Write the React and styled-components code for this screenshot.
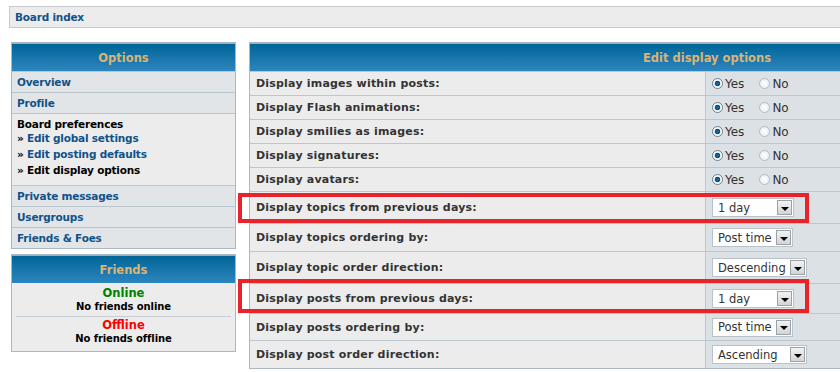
import React from "react";
import styled, { createGlobalStyle } from "styled-components";

const Global = createGlobalStyle`
  html, body {
    margin: 0;
    padding: 0;
    background: #fff;
    overflow: hidden;
  }
  body {
    font-family: Verdana, "DejaVu Sans", sans-serif;
    font-size: 11px;
    color: #000;
  }
`;

const Page = styled.div`
  position: relative;
  width: 1200px;
  padding: 6px 0 0 9px;
`;

const Breadcrumb = styled.div`
  height: 20px;
  width: 1100px;
  background: #ececec;
  border: 1px solid #c5cbd0;
  display: flex;
  align-items: center;
  padding-left: 5px;
`;

const NavLink = styled.a`
  color: ${(p) => (p.$active ? "#000" : "#105289")};
  font-weight: bold;
  text-decoration: none;
  font-size: 10.5px;
  letter-spacing: -0.2px;
`;

const Columns = styled.div`
  display: flex;
  gap: 13px;
  margin-top: 14px;
  margin-left: 2px;
  align-items: flex-start;
`;

const Side = styled.div`
  width: 225px;
  display: flex;
  flex-direction: column;
  gap: 5px;
`;

const Panel = styled.div`
  border: 1px solid #a9b8c2;
  background: #ececec;
`;

const Head = styled.div`
  height: 27px;
  background: linear-gradient(#006597, #2d86be);
  border-top: 1px solid #8fb3cc;
  color: #dcb377;
  font-weight: bold;
  font-size: 11.5px;
  display: flex;
  align-items: center;
  justify-content: center;
`;

const NavRow = styled.div`
  height: 20px;
  background: #e1e5e8;
  border-top: 1px solid #bcc6cd;
  display: flex;
  align-items: center;
  padding-left: 5px;
`;

const NavBlock = styled.div`
  background: #ececec;
  border-top: 1px solid #bcc6cd;
  padding: 4px 5px 5px;
  display: flex;
  flex-direction: column;
  gap: 4px;
  height: 62px;
`;

const SubLink = styled(NavLink)`
  &::before {
    content: "» ";
    color: #000;
  }
`;

const BlockTitle = styled.span`
  font-weight: bold;
  font-size: 10.5px;
  letter-spacing: -0.2px;
  margin-bottom: -2px;
`;

const FriendsBody = styled.div`
  display: flex;
  flex-direction: column;
  align-items: center;
  padding: 3px 0 5px;
`;

const Status = styled.div`
  color: ${(p) => p.$color};
  font-weight: bold;
  font-size: 11.5px;
  line-height: 14px;
`;

const StatusNote = styled.div`
  font-weight: bold;
  font-size: 10px;
  line-height: 14px;
  letter-spacing: -0.1px;
`;

const Divider = styled.div`
  align-self: stretch;
  margin: 2px 4px 1px;
  border-top: 1px solid #c8cfd4;
`;

const Main = styled(Panel)`
  width: 914px;
`;

const Row = styled.div`
  display: flex;
  height: ${(p) => p.$h}px;
  border-top: 1px solid #bcc6cd;
`;

const Label = styled.div`
  width: 449px;
  background: #ececec;
  border-right: 1px solid #bcc6cd;
  display: flex;
  align-items: center;
  padding-left: 6px;
  font-weight: bold;
  color: #333;
  letter-spacing: 0.2px;
`;

const Value = styled.div`
  flex: 1;
  background: #dce1e5;
  display: flex;
  align-items: center;
  padding-left: 4px;
  font-size: 12px;
  color: #333;
`;

const RadioItem = styled.span`
  display: inline-flex;
  align-items: center;
  margin-right: 13px;
`;

const RadioDot = styled.span`
  width: 11px;
  height: 11px;
  border-radius: 50%;
  box-sizing: border-box;
  border: 1px solid ${(p) => (p.$on ? "#6d7f8c" : "#b4bcc2")};
  background: ${(p) =>
    p.$on
      ? "radial-gradient(circle, #1c6ea8 0, #0a4f80 2.4px, #fff 3.2px, #e8ecef 100%)"
      : "radial-gradient(circle, #fff 0, #e3e7ea 100%)"};
  margin: 0 2px 0 2px;
`;

const Select = styled.div`
  width: ${(p) => p.$w}px;
  height: 19px;
  box-sizing: border-box;
  border: 1px solid #b9c2c9;
  background: #fff;
  display: flex;
  align-items: center;
  justify-content: space-between;
  padding: 0 1px 0 5px;
  margin-left: 2px;
  font-size: 11.5px;
  color: #333;
`;

const Arrow = styled.span`
  width: 15px;
  height: 15px;
  box-sizing: border-box;
  border: 1px solid #9aa3aa;
  background: linear-gradient(#f2f2f2, #d4d4d4);
  display: flex;
  align-items: center;
  justify-content: center;
  &::after {
    content: "";
    border-left: 4px solid transparent;
    border-right: 4px solid transparent;
    border-top: 4px solid #000;
    margin-top: 2px;
  }
`;

const Mark = styled.div`
  position: absolute;
  left: 238px;
  top: ${(p) => p.$top}px;
  width: 571px;
  height: ${(p) => p.$h}px;
  box-sizing: border-box;
  border: 4px solid #e8232a;
  pointer-events: none;
`;

const radios = [
  "Display images within posts:",
  "Display Flash animations:",
  "Display smilies as images:",
  "Display signatures:",
  "Display avatars:",
];

const selects = [
  { label: "Display topics from previous days:", value: "1 day", w: 82, h: 31 },
  { label: "Display topics ordering by:", value: "Post time", w: 81, h: 27 },
  { label: "Display topic order direction:", value: "Descending", w: 95, h: 31 },
  { label: "Display posts from previous days:", value: "1 day", w: 82, h: 29 },
  { label: "Display posts ordering by:", value: "Post time", w: 81, h: 26 },
  { label: "Display post order direction:", value: "Ascending", w: 95, h: 27 },
];

export default function App() {
  return (
    <Page>
      <Global />
      <Breadcrumb>
        <NavLink href="#">Board index</NavLink>
      </Breadcrumb>
      <Columns>
        <Side>
          <Panel>
            <Head>Options</Head>
            <NavRow><NavLink href="#">Overview</NavLink></NavRow>
            <NavRow><NavLink href="#">Profile</NavLink></NavRow>
            <NavBlock>
              <BlockTitle>Board preferences</BlockTitle>
              <SubLink href="#">Edit global settings</SubLink>
              <SubLink href="#">Edit posting defaults</SubLink>
              <SubLink href="#" $active>Edit display options</SubLink>
            </NavBlock>
            <NavRow><NavLink href="#">Private messages</NavLink></NavRow>
            <NavRow><NavLink href="#">Usergroups</NavLink></NavRow>
            <NavRow><NavLink href="#">Friends &amp; Foes</NavLink></NavRow>
          </Panel>
          <Panel>
            <Head>Friends</Head>
            <FriendsBody>
              <Status $color="#008000">Online</Status>
              <StatusNote>No friends online</StatusNote>
              <Divider />
              <Status $color="#ff0000">Offline</Status>
              <StatusNote>No friends offline</StatusNote>
            </FriendsBody>
          </Panel>
        </Side>
        <Main>
          <Head>Edit display options</Head>
          {radios.map((label) => (
            <Row key={label} $h={23}>
              <Label>{label}</Label>
              <Value>
                <RadioItem><RadioDot $on />Yes</RadioItem>
                <RadioItem><RadioDot />No</RadioItem>
              </Value>
            </Row>
          ))}
          {selects.map((s) => (
            <Row key={s.label} $h={s.h}>
              <Label>{s.label}</Label>
              <Value>
                <Select $w={s.w}>
                  {s.value}
                  <Arrow />
                </Select>
              </Value>
            </Row>
          ))}
        </Main>
      </Columns>
      <Mark $top={193} $h={30} />
      <Mark $top={279} $h={34} />
    </Page>
  );
}
